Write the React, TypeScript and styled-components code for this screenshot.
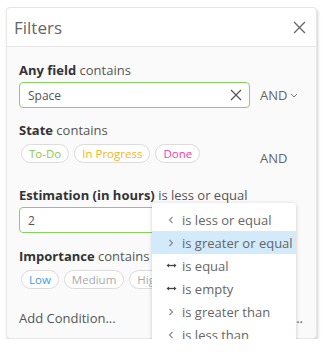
import React from 'react';
import styled, {createGlobalStyle} from 'styled-components';

const GlobalStyle = createGlobalStyle`
    html, body {
        margin: 0;
        padding: 0;
        background: #fff;
    }

    body {
        font-family: 'Open Sans', 'Noto Sans', sans-serif;
        color: #555;
    }
`;

const Panel = styled.div`
    width: 311px;
    margin: 7px 0 0 6px;
    background: #fafafa;
    border: 1px solid #e6e6e6;
    border-radius: 4px;
    box-shadow: 1px 2px 3px rgba(0, 0, 0, 0.18);
    box-sizing: border-box;
`;

const Header = styled.div`
    height: 38px;
    display: flex;
    align-items: center;
    justify-content: space-between;
    padding: 0 10px 0 7px;
    background: #fff;
    border-bottom: 1px solid #e6e6e6;
    border-radius: 4px 4px 0 0;
`;

const Title = styled.h1`
    margin: 0;
    font-size: 17px;
    font-weight: 400;
    color: #666;
`;

const CloseButton = styled.button`
    appearance: none;
    background: none;
    border: 0;
    padding: 0;
    width: 13px;
    height: 13px;
    display: flex;
    color: #666;
`;

const Body = styled.div`
    padding: 14px 13px 11px 12px;
`;

const Condition = styled.section<{$gap?: number}>`
    margin-bottom: ${p => p.$gap ?? 13}px;
`;

const Label = styled.div`
    font-size: 13px;
    line-height: 18px;
    color: #555;

    b {
        font-weight: 700;
        color: #333;
    }
`;

const Row = styled.div<{$pad?: number}>`
    position: relative;
    display: grid;
    grid-template-columns: 231px auto;
    column-gap: 10px;
    margin-top: ${p => p.$pad ?? 3}px;
`;

const InputBox = styled.div`
    height: 26px;
    display: flex;
    align-items: center;
    padding: 0 7px 0 8px;
    background: #fff;
    border: 1px solid #86d162;
    border-radius: 4px;
    box-sizing: border-box;
    font-size: 12px;
    color: #555;

    span {
        flex: 1;
    }

    svg {
        color: #555;
    }
`;

const Connector = styled.div<{$top?: number}>`
    display: flex;
    align-items: center;
    gap: 3px;
    height: 18px;
    margin-top: ${p => p.$top ?? 4}px;
    font-size: 13px;
    color: #666;
`;

const Chips = styled.div`
    display: flex;
    gap: 5px;
    padding-left: 2px;
`;

const Chip = styled.span<{$color: string}>`
    height: 19px;
    padding: 0 7px;
    display: inline-flex;
    align-items: center;
    background: #fff;
    border: 1px solid #dcdcdc;
    border-radius: 10px;
    box-sizing: border-box;
    font-size: 11.5px;
    color: ${p => p.$color};
`;

const Footer = styled.div`
    display: flex;
    justify-content: space-between;
    font-size: 13px;
    line-height: 18px;
    color: #555;
    margin-top: 20px;
`;

const Menu = styled.ul`
    position: absolute;
    left: 133px;
    top: -4px;
    width: 144px;
    margin: 0;
    padding: 5px 0 0;
    list-style: none;
    background: #fff;
    box-shadow: 0 1px 4px rgba(0, 0, 0, 0.2);
    border-radius: 3px;
    z-index: 5;
`;

const MenuItem = styled.li<{$active?: boolean}>`
    height: 23px;
    display: flex;
    align-items: center;
    padding-left: 8px;
    font-size: 13px;
    color: #666;
    background: ${p => (p.$active ? '#d3eafb' : 'transparent')};
`;

const MenuIcon = styled.span`
    width: 22px;
    display: flex;
    justify-content: center;
    color: #777;
`;

const CrossIcon = ({size = 12}: {size?: number}) => (
    <svg width={size} height={size} viewBox='0 0 12 12'>
        <path d='M1 1 L11 11 M11 1 L1 11' stroke='currentColor' strokeWidth='1.2' fill='none' />
    </svg>
);

const ChevronDown = () => (
    <svg width='8' height='5' viewBox='0 0 8 5'>
        <path d='M1 1 L4 4 L7 1' stroke='#777' strokeWidth='1' fill='none' />
    </svg>
);

const OpIcon = ({kind}: {kind: 'lt' | 'gt' | 'eq'}) => {
    if (kind === 'eq') {
        return (
            <svg width='11' height='7' viewBox='0 0 11 7'>
                <path d='M2 3.5 H9' stroke='#444' strokeWidth='1.3' fill='none' />
                <path d='M0.5 3.5 L3 1.5 V5.5 Z M10.5 3.5 L8 1.5 V5.5 Z' fill='#444' />
            </svg>
        );
    }
    return (
        <svg width='6' height='8' viewBox='0 0 6 8'>
            <path
                d={kind === 'lt' ? 'M4.5 1 L1.5 4 L4.5 7' : 'M1.5 1 L4.5 4 L1.5 7'}
                stroke='#888'
                strokeWidth='1.1'
                fill='none'
            />
        </svg>
    );
};

const operators: {kind: 'lt' | 'gt' | 'eq'; text: string; active?: boolean}[] = [
    {kind: 'lt', text: 'is less or equal'},
    {kind: 'gt', text: 'is greater or equal', active: true},
    {kind: 'eq', text: 'is equal'},
    {kind: 'eq', text: 'is empty'},
    {kind: 'gt', text: 'is greater than'},
    {kind: 'lt', text: 'is less than'}
];

const App = () => (
    <>
        <GlobalStyle />
        <Panel>
            <Header>
                <Title>Filters</Title>
                <CloseButton aria-label='Close'>
                    <CrossIcon size={13} />
                </CloseButton>
            </Header>

            <Body>
                <Condition>
                    <Label>
                        <b>Any field</b> contains
                    </Label>
                    <Row>
                        <InputBox>
                            <span>Space</span>
                            <CrossIcon />
                        </InputBox>
                        <Connector>
                            AND <ChevronDown />
                        </Connector>
                    </Row>
                </Condition>

                <Condition $gap={19}>
                    <Label>
                        <b>State</b> contains
                    </Label>
                    <Row $pad={5}>
                        <Chips>
                            <Chip $color='#8cc84b'>To-Do</Chip>
                            <Chip $color='#f5b522'>In Progress</Chip>
                            <Chip $color='#f03ca8'>Done</Chip>
                        </Chips>
                        <Connector $top={5}>AND</Connector>
                    </Row>
                </Condition>

                <Condition $gap={14}>
                    <Label>
                        <b>Estimation (in hours)</b> is less or equal
                    </Label>
                    <Row>
                        <InputBox>
                            <span>2</span>
                        </InputBox>
                        <Menu>
                            {operators.map(op => (
                                <MenuItem key={op.text} $active={op.active}>
                                    <MenuIcon>
                                        <OpIcon kind={op.kind} />
                                    </MenuIcon>
                                    {op.text}
                                </MenuItem>
                            ))}
                        </Menu>
                    </Row>
                </Condition>

                <Condition $gap={0}>
                    <Label>
                        <b>Importance</b> contains
                    </Label>
                    <Row $pad={5}>
                        <Chips>
                            <Chip $color='#3a9ee4'>Low</Chip>
                            <Chip $color='#aaa'>Medium</Chip>
                            <Chip $color='#aaa'>High</Chip>
                        </Chips>
                    </Row>
                </Condition>

                <Footer>
                    <span>Add Condition...</span>
                    <span>Clear All...</span>
                </Footer>
            </Body>
        </Panel>
    </>
);

export default App;
